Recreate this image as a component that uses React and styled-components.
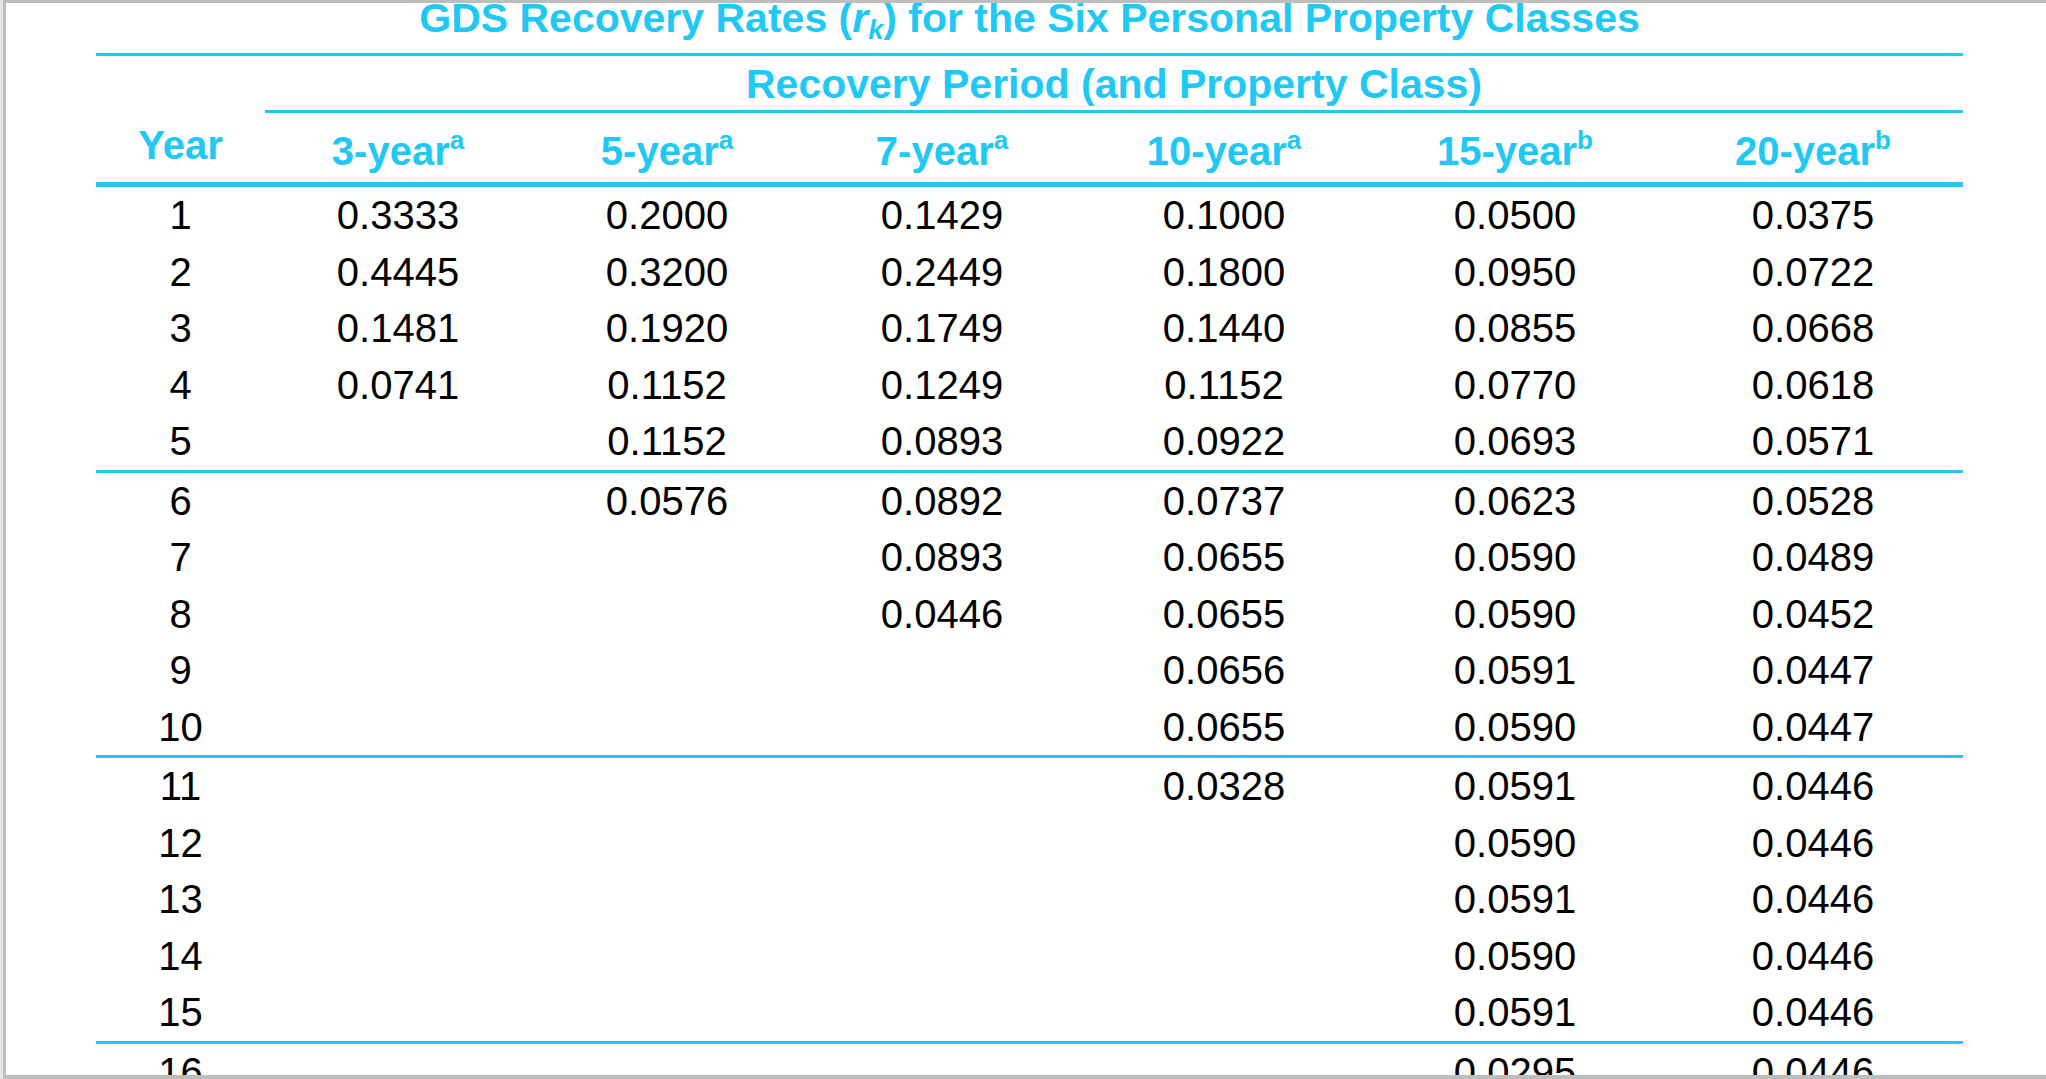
import styled, { createGlobalStyle } from "styled-components";

const CYAN = "#20c8f6";

const GlobalStyle = createGlobalStyle`
  html, body {
    margin: 0;
    padding: 0;
    background: #e4e4e4;
    overflow: hidden;
  }
  * {
    box-sizing: border-box;
  }
`;

const Frame = styled.div`
  height: 100vh;
  margin-left: 3px;
  background: #fff;
  border-top: 3px solid #bdbdbd;
  border-left: 3px solid #bdbdbd;
  border-bottom: 4px solid #bdbdbd;
  overflow: hidden;
  font-family: "Liberation Sans", Arial, Helvetica, sans-serif;
`;

const Sheet = styled.div`
  width: 1867px;
  margin-left: 90px;
`;

const Title = styled.div`
  height: 50px;
  line-height: 31px;
  font-size: 41px;
  font-weight: 700;
  color: ${CYAN};
  text-align: center;
  white-space: nowrap;

  i {
    font-style: italic;
  }
  sub {
    font-size: 27px;
    line-height: 0;
    vertical-align: -7px;
  }
`;

const COLUMNS = "169px 266px 272px 278px 286px 296px 300px";

const Head = styled.div`
  display: grid;
  grid-template-columns: ${COLUMNS};
  grid-template-rows: 57px 69px;
  border-top: 3px solid ${CYAN};
  border-bottom: 5px solid ${CYAN};
  color: ${CYAN};
  font-weight: 700;
`;

const YearHead = styled.div`
  grid-row: 1 / 3;
  grid-column: 1;
  display: flex;
  align-items: flex-end;
  justify-content: center;
  padding-bottom: 17px;
  font-size: 40px;
  line-height: 40px;
`;

const PeriodHead = styled.div`
  grid-row: 1;
  grid-column: 2 / -1;
  border-bottom: 3px solid ${CYAN};
  display: flex;
  align-items: center;
  justify-content: center;
  font-size: 41px;
  line-height: 40px;
  padding-top: 2px;
`;

const ColHead = styled.div`
  grid-row: 2;
  display: flex;
  align-items: flex-end;
  justify-content: center;
  padding-bottom: 11px;
  font-size: 40px;
  line-height: 40px;
  white-space: nowrap;
`;

const Note = styled.sup`
  font-size: 26px;
  line-height: 0;
  vertical-align: 16px;
`;

const Group = styled.div`
  border-bottom: 3px solid ${CYAN};
`;

const Row = styled.div`
  display: grid;
  grid-template-columns: ${COLUMNS};
  height: 56.5px;
  align-items: center;
`;

const Cell = styled.div`
  text-align: center;
  font-size: 40px;
  line-height: 56.5px;
  color: #000;
`;

const classes = [
  { label: "3-year", note: "a", values: ["0.3333", "0.4445", "0.1481", "0.0741"] },
  {
    label: "5-year",
    note: "a",
    values: ["0.2000", "0.3200", "0.1920", "0.1152", "0.1152", "0.0576"],
  },
  {
    label: "7-year",
    note: "a",
    values: ["0.1429", "0.2449", "0.1749", "0.1249", "0.0893", "0.0892", "0.0893", "0.0446"],
  },
  {
    label: "10-year",
    note: "a",
    values: [
      "0.1000", "0.1800", "0.1440", "0.1152", "0.0922", "0.0737",
      "0.0655", "0.0655", "0.0656", "0.0655", "0.0328",
    ],
  },
  {
    label: "15-year",
    note: "b",
    values: [
      "0.0500", "0.0950", "0.0855", "0.0770", "0.0693", "0.0623",
      "0.0590", "0.0590", "0.0591", "0.0590", "0.0591", "0.0590",
      "0.0591", "0.0590", "0.0591", "0.0295",
    ],
  },
  {
    label: "20-year",
    note: "b",
    values: [
      "0.0375", "0.0722", "0.0668", "0.0618", "0.0571", "0.0528",
      "0.0489", "0.0452", "0.0447", "0.0447", "0.0446", "0.0446",
      "0.0446", "0.0446", "0.0446", "0.0446", "0.0446", "0.0446",
      "0.0446", "0.0446", "0.0223",
    ],
  },
];

const years = Array.from({ length: 21 }, (_, i) => i + 1);
const groups = [];
for (let i = 0; i < years.length; i += 5) groups.push(years.slice(i, i + 5));

export default function App() {
  return (
    <>
      <GlobalStyle />
      <Frame>
        <Sheet>
          <Title>
            GDS Recovery Rates (<i>r<sub>k</sub></i>) for the Six Personal Property Classes
          </Title>
          <Head>
            <YearHead>Year</YearHead>
            <PeriodHead>Recovery Period (and Property Class)</PeriodHead>
            {classes.map((c) => (
              <ColHead key={c.label}>
                <span>
                  {c.label}
                  <Note>{c.note}</Note>
                </span>
              </ColHead>
            ))}
          </Head>
          {groups.map((g, gi) => (
            <Group key={gi}>
              {g.map((year) => (
                <Row key={year}>
                  <Cell>{year}</Cell>
                  {classes.map((c) => (
                    <Cell key={c.label}>{c.values[year - 1] || ""}</Cell>
                  ))}
                </Row>
              ))}
            </Group>
          ))}
        </Sheet>
      </Frame>
    </>
  );
}
